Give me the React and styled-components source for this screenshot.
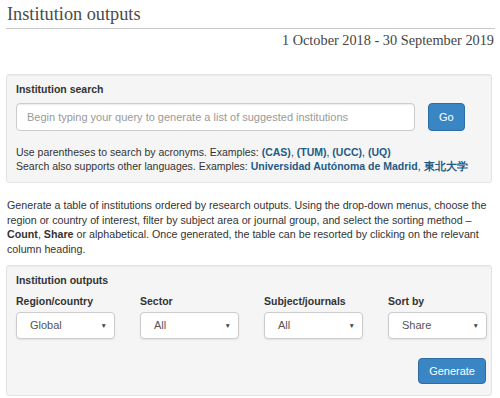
import React from 'react';
import styled, { createGlobalStyle } from 'styled-components';

const GlobalStyle = createGlobalStyle`
    body {
        margin: 0;
        background: #fff;
        font-family: "Liberation Sans", Arial, sans-serif;
        color: #333;
    }
`;

const Page = styled.div`
    width: 500px;
    box-sizing: border-box;
    padding: 0 8px 0 6px;
`;

const Title = styled.h1`
    margin: 0 -3px 0 0;
    padding: 4px 1px 3px 1px;
    font-family: "Liberation Serif", "Times New Roman", serif;
    font-weight: normal;
    font-size: 18.3px;
    line-height: 21px;
    color: #4a4a4a;
    border-bottom: 1px solid #c8c8c8;
`;

const DateRange = styled.div`
    text-align: right;
    margin: 2px -2px 0 0;
    font-family: "Liberation Serif", "Times New Roman", serif;
    font-size: 14.3px;
    line-height: 18px;
    color: #444;
`;

const Well = styled.div`
    margin-top: ${p => p.$top}px;
    background: #f5f5f5;
    border: 1px solid #e3e3e3;
    border-radius: 3px;
    box-sizing: border-box;
    height: ${p => p.$height}px;
    padding: 7px 5px 0 9px;
    box-shadow: inset 0 1px 1px rgba(0, 0, 0, 0.04);
`;

const WellTitle = styled.div`
    font-size: 10.5px;
    font-weight: bold;
    color: #333;
    line-height: 14px;
`;

const SearchRow = styled.div`
    display: flex;
    align-items: center;
    gap: 13px;
    margin-top: 7px;
`;

const SearchInput = styled.div`
    width: 399px;
    height: 28px;
    box-sizing: border-box;
    background: #fff;
    border: 1px solid #ccc;
    border-radius: 4px;
    padding: 0 10px;
    display: flex;
    align-items: center;
    font-size: 11px;
    color: #999;
    box-shadow: inset 0 1px 1px rgba(0, 0, 0, 0.075);
`;

const Button = styled.div`
    background: #3a86c4;
    border: 1px solid #2e6da4;
    border-radius: 4px;
    color: #fff;
    font-size: 11px;
    height: ${p => p.$height}px;
    box-sizing: border-box;
    padding: 0 ${p => p.$pad}px;
    display: flex;
    align-items: center;
    justify-content: center;
`;

const Help = styled.div`
    margin-top: 14px;
    font-size: 10.5px;
    line-height: 14px;
    color: #333;
    white-space: nowrap;
`;

const Ex = styled.b`
    color: #1f5b86;
`;

const Para = styled.p`
    margin: 15px 1px 0 1px;
    font-size: 10.7px;
    line-height: 14.7px;
    color: #333;
    white-space: nowrap;
`;

const Strong = styled.b`
    color: #333;
`;

const Filters = styled.div`
    display: grid;
    grid-template-columns: repeat(4, 99px);
    column-gap: 25px;
    margin-top: 7px;
`;

const Field = styled.div`
    display: flex;
    flex-direction: column;
`;

const Label = styled.div`
    font-size: 10.5px;
    font-weight: bold;
    color: #333;
    line-height: 14px;
    margin-bottom: 4px;
`;

const Select = styled.div`
    height: 27px;
    box-sizing: border-box;
    background: #fff;
    border: 1px solid #ccc;
    border-radius: 4px;
    display: flex;
    align-items: center;
    justify-content: space-between;
    padding: 0 7px 0 13px;
    font-size: 11px;
    color: #555;
    box-shadow: 0 1px 2px rgba(0, 0, 0, 0.08);
`;

const Caret = styled.span`
    font-size: 6.5px;
    color: #444;
`;

const Actions = styled.div`
    display: flex;
    justify-content: flex-end;
    margin-top: 19px;
`;

const filters = [
    { label: 'Region/country', value: 'Global' },
    { label: 'Sector', value: 'All' },
    { label: 'Subject/journals', value: 'All' },
    { label: 'Sort by', value: 'Share' },
];

export default function App() {
    return (
        <React.Fragment>
            <GlobalStyle />
            <Page>
                <Title>Institution outputs</Title>
                <DateRange>1 October 2018 - 30 September 2019</DateRange>

                <Well $top={25} $height={109}>
                    <WellTitle>Institution search</WellTitle>
                    <SearchRow>
                        <SearchInput>Begin typing your query to generate a list of suggested institutions</SearchInput>
                        <Button $pad={10} $height={28}>Go</Button>
                    </SearchRow>
                    <Help>
                        Use parentheses to search by acronyms. Examples: <Ex>(CAS)</Ex>, <Ex>(TUM)</Ex>, <Ex>(UCC)</Ex>, <Ex>(UQ)</Ex>
                        <br />
                        Search also supports other languages. Examples: <Ex>Universidad Autónoma de Madrid</Ex>, <Ex>東北大学</Ex>
                    </Help>
                </Well>

                <Para>
                    Generate a table of institutions ordered by research outputs. Using the drop-down menus, choose the
                    <br />
                    region or country of interest, filter by subject area or journal group, and select the sorting method –
                    <br />
                    <Strong>Count</Strong>, <Strong>Share</Strong> or alphabetical. Once generated, the table can be resorted by clicking on the relevant
                    <br />
                    column heading.
                </Para>

                <Well $top={8} $height={131}>
                    <WellTitle>Institution outputs</WellTitle>
                    <Filters>
                        {filters.map(f => (
                            <Field key={f.label}>
                                <Label>{f.label}</Label>
                                <Select>
                                    <span>{f.value}</span>
                                    <Caret>▼</Caret>
                                </Select>
                            </Field>
                        ))}
                    </Filters>
                    <Actions>
                        <Button $pad={10} $height={26}>Generate</Button>
                    </Actions>
                </Well>
            </Page>
        </React.Fragment>
    );
}
